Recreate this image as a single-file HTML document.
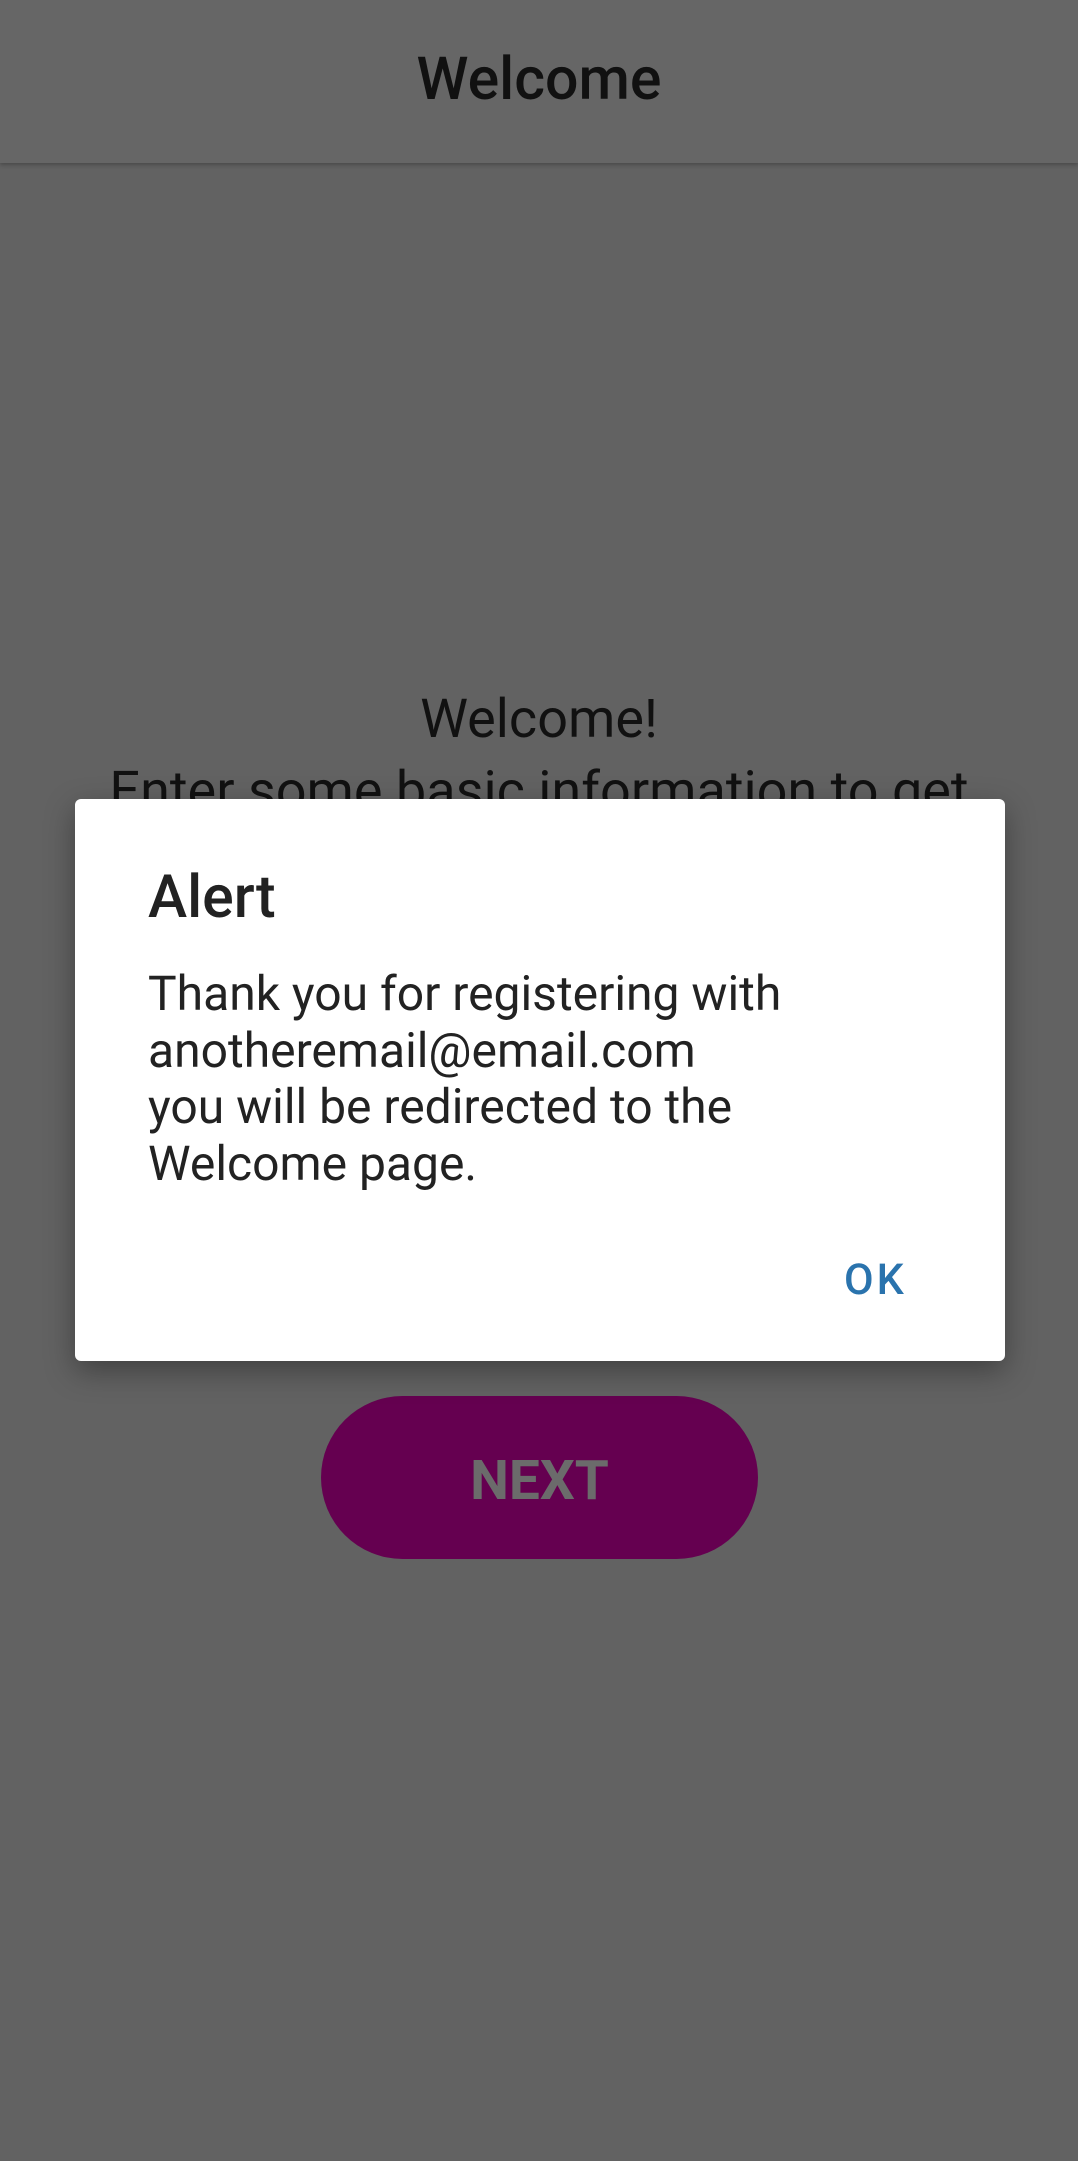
<!DOCTYPE html>
<html><head><meta charset="utf-8"><style>
html,body{margin:0;padding:0}
body{width:1078px;height:2161px;background:#626262;position:relative;overflow:hidden;font-family:"Roboto","Liberation Sans",sans-serif}
.hdr{position:absolute;left:0;top:0;width:1078px;height:163px;background:#666;box-shadow:0 2px 4px rgba(0,0,0,.25)}
.hdr div{position:absolute;left:0;right:0;top:45px;text-align:center;font-size:59px;font-weight:500;color:#111;line-height:70px}
.wel{position:absolute;left:0;right:0;top:684px;text-align:center;font-size:54px;color:#111;line-height:72px}
.next{position:absolute;left:321px;top:1396px;width:437px;height:163px;border-radius:82px;background:#650050;color:#6b6b6b;font-weight:bold;font-size:55px;text-align:center;line-height:170px}
.dlg{position:absolute;left:75px;top:799px;width:930px;height:562px;background:#fff;border-radius:6px;box-shadow:0 10px 30px rgba(0,0,0,.35)}
.t{position:absolute;left:73px;top:64px;font-size:59px;font-weight:500;color:#222;line-height:70px}
.b{position:absolute;left:73px;top:167px;font-size:48px;color:#222;line-height:56.5px}
.ok{position:absolute;left:769px;top:456px;font-size:43px;font-weight:500;color:#2a73ad;letter-spacing:3px;line-height:50px}
</style></head><body>
<div class="hdr"><div>Welcome</div></div>
<div class="wel">Welcome!<br>Enter some basic information to get</div>
<div class="next">NEXT</div>
<div class="dlg">
<div class="t">Alert</div>
<div class="b">Thank you for registering with<br>anotheremail@email.com<br>you will be redirected to the<br>Welcome page.</div>
<div class="ok">OK</div>
</div>
</body></html>
